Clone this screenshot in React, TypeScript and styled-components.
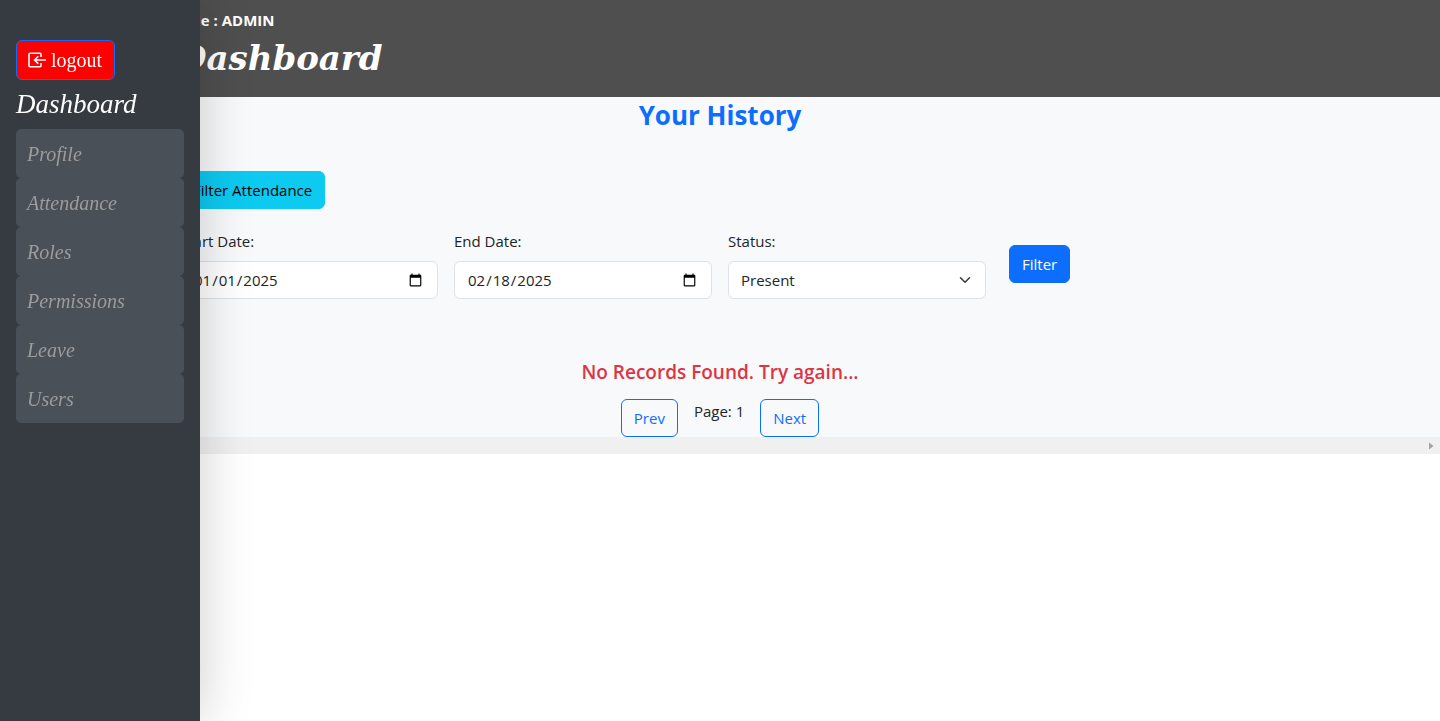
import React from "react";
import styled, { createGlobalStyle } from "styled-components";

const sans = `"Segoe UI", "Open Sans", "Noto Sans", sans-serif`;
const serif = `Georgia, "Liberation Serif", serif`;

const GlobalStyle = createGlobalStyle`
  *, *::before, *::after { box-sizing: border-box; }
  body {
    margin: 0;
    background: #fff;
    color: #212529;
    font: 400 15px/24px ${sans};
  }
  h1, h2, h3, p, ul { margin: 0; padding: 0; }
  button, input, select { font: inherit; }
`;

const Sidebar = styled.aside`
  position: fixed;
  top: 0;
  bottom: 0;
  left: 0;
  z-index: 10;
  width: 200px;
  padding: 40px 16px 16px;
  background: #363a41;
  box-shadow: 0 0 50px rgba(0, 0, 0, 0.2);
  font-family: ${serif};
`;

const LogoutButton = styled.button`
  display: flex;
  align-items: center;
  gap: 4px;
  height: 40px;
  padding: 0 12px 0 10px;
  border: 1px solid #0d6efd;
  border-radius: 6px;
  background: #f00;
  color: #fff;
  font-size: 20px;
  cursor: pointer;
`;

const SidebarTitle = styled.h2`
  margin: 8px 0 9px;
  color: #fff;
  font-size: 27px;
  font-style: italic;
  font-weight: 400;
  line-height: 32px;
`;

const NavList = styled.ul`
  list-style: none;
`;

const NavLink = styled.a`
  display: block;
  padding: 13px 11px 12px;
  border-radius: 5px;
  background: #4a5058;
  color: #9c9c9c;
  font-size: 20px;
  font-style: italic;
  line-height: 24px;
  text-decoration: none;
`;

const Container = styled.div`
  width: 75%;
  margin: 0 auto;
`;

const Header = styled.header`
  height: 97px;
  padding-top: 8px;
  background: #4f4f4f;
  color: #fff;
`;

const HeaderContainer = styled(Container)`
  width: calc(75% + 6px);
`;

const Role = styled.p`
  font-weight: 700;
`;

const HeaderTitle = styled.h1`
  font: italic 700 34px/52px "DejaVu Serif", serif;
`;

const Main = styled.main`
  background: #f8f9fb;
`;

const HistoryTitle = styled.h2`
  color: #0d6efd;
  font-size: 26px;
  font-weight: 700;
  line-height: 36px;
  text-align: center;
`;

const Button = styled.button<{ $tone: "info" | "primary" | "outline" }>`
  height: 38px;
  padding: 0 12px;
  border: 1px solid ${(p) => (p.$tone === "info" ? "#0dcaf0" : "#0d6efd")};
  border-radius: 6px;
  background: ${(p) =>
    p.$tone === "info" ? "#0dcaf0" : p.$tone === "primary" ? "#0d6efd" : "transparent"};
  color: ${(p) => (p.$tone === "info" ? "#000" : p.$tone === "primary" ? "#fff" : "#0d6efd")};
  white-space: nowrap;
  cursor: pointer;
`;

const Toolbar = styled.div`
  padding-top: 38px;
`;

const FilterForm = styled.form`
  display: grid;
  grid-template-columns: repeat(4, minmax(0, 1fr));
  gap: 16px;
  align-items: center;
  padding: 20px 0 61px;
`;

const Field = styled.div`
  display: flex;
  flex-direction: column;
  gap: 8px;
`;

const controlStyle = `
  width: 100%;
  height: 38px;
  padding: 6px 12px;
  border: 1px solid #dee2e6;
  border-radius: 6px;
  background: #fff;
  color: #212529;
`;

const DateInput = styled.input`
  ${controlStyle}
`;

const SelectWrap = styled.div`
  display: grid;
  align-items: center;

  > * { grid-area: 1 / 1; }

  > svg {
    justify-self: end;
    margin-right: 13px;
    pointer-events: none;
  }
`;

const Select = styled.select`
  ${controlStyle}
  appearance: none;
`;

const SubmitCell = styled.div`
  padding-left: 7px;
`;

const EmptyMessage = styled.h3`
  color: #dc3545;
  font-size: 19px;
  font-weight: 600;
  line-height: 24px;
  text-align: center;
`;

const Pager = styled.nav`
  display: flex;
  justify-content: center;
  gap: 16px;
  padding-top: 15px;
`;

const ScrollTrack = styled.div`
  display: flex;
  align-items: center;
  justify-content: flex-end;
  height: 17px;
  padding-right: 6px;
  background: #f0f0f0;
`;

const links = ["Profile", "Attendance", "Roles", "Permissions", "Leave", "Users"];

const LogoutIcon = () => (
  <svg width="20" height="20" viewBox="0 0 20 20" fill="none" stroke="#fff" strokeWidth="1.600" aria-hidden="true">
    <path d="M14 7V4.300Q14 3.300 13 3.300H3Q2 3.300 2 4.300V15.700Q2 16.700 3 16.700H13Q14 16.700 14 15.700V13" />
    <path d="M19 10H7.500M11.300 6.200L7.500 10L11.300 13.800" />
  </svg>
);

export default function App() {
  return (
    <>
      <GlobalStyle />
      <Sidebar>
        <LogoutButton type="button">
          <LogoutIcon />
          logout
        </LogoutButton>
        <SidebarTitle>Dashboard</SidebarTitle>
        <NavList>
          {links.map((label) => (
            <li key={label}>
              <NavLink href={`#${label.toLowerCase()}`}>{label}</NavLink>
            </li>
          ))}
        </NavList>
      </Sidebar>

      <Header>
        <HeaderContainer>
          <Role>Role : ADMIN</Role>
          <HeaderTitle>Dashboard</HeaderTitle>
        </HeaderContainer>
      </Header>

      <Main>
        <Container>
          <HistoryTitle>Your History</HistoryTitle>
          <Toolbar>
            <Button type="button" $tone="info">Filter Attendance</Button>
          </Toolbar>
          <FilterForm onSubmit={(e) => e.preventDefault()}>
            <Field>
              <label htmlFor="start">Start Date:</label>
              <DateInput id="start" type="date" defaultValue="2025-01-01" />
            </Field>
            <Field>
              <label htmlFor="end">End Date:</label>
              <DateInput id="end" type="date" defaultValue="2025-02-18" />
            </Field>
            <Field>
              <label htmlFor="status">Status:</label>
              <SelectWrap>
                <Select id="status" defaultValue="Present">
                  <option>Present</option>
                  <option>Absent</option>
                </Select>
                <svg width="16" height="12" viewBox="0 0 16 16" fill="none" stroke="#343a40" strokeWidth="2" strokeLinecap="round" strokeLinejoin="round" aria-hidden="true">
                  <path d="m2 5 6 6 6-6" />
                </svg>
              </SelectWrap>
            </Field>
            <SubmitCell>
              <Button type="submit" $tone="primary">Filter</Button>
            </SubmitCell>
          </FilterForm>
          <EmptyMessage>No Records Found. Try again...</EmptyMessage>
          <Pager aria-label="Pagination">
            <Button type="button" $tone="outline">Prev</Button>
            <span>Page: 1</span>
            <Button type="button" $tone="outline">Next</Button>
          </Pager>
        </Container>
        <ScrollTrack aria-hidden="true">
          <svg width="5" height="8" viewBox="0 0 5 8">
            <path d="M0 0.500L4.500 4L0 7.500Z" fill="#a3a3a3" />
          </svg>
        </ScrollTrack>
      </Main>
    </>
  );
}
